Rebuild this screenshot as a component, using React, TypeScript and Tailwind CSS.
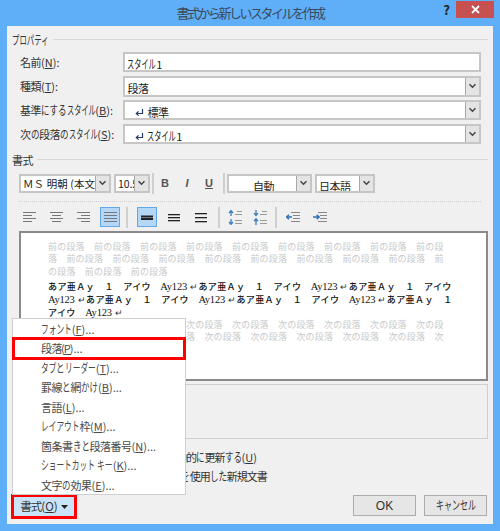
const jp = "font-['Noto_Sans_CJK_JP',sans-serif]";

// Meiryo UI has narrow kana, so each kana run is squeezed to its own advance
function Mei({ text, size = 11, kanaSize = 12.5, kanji = 10.5, hira = 8.5, kata = 7.2 }: { text: string; size?: number; kanaSize?: number; kanji?: number; hira?: number; kata?: number }) {
  const runs = text.match(/[\u3040-\u309f]+|[\u30a0-\u30ff]+|[^\u3040-\u30ff]+/g) ?? [];
  return (
    <span className="whitespace-nowrap" style={{ fontSize: size }}>
      {runs.map((r, i) => {
        const code = r.charCodeAt(0);
        const isHira = code >= 0x3040 && code <= 0x309f;
        const isKata = code >= 0x30a0 && code <= 0x30ff;
        if (isHira || isKata) {
          const adv = isHira ? hira : kata;
          return (
            <span key={i} className="inline-block origin-left" style={{ width: adv * r.length, fontSize: kanaSize, lineHeight: 1, transform: `scaleX(${adv / kanaSize})` }}>
              {r}
            </span>
          );
        }
        const isCjk = code > 0x2e80;
        return (
          <span key={i} style={{ letterSpacing: isCjk ? kanji - size : undefined }}>
            {r}
          </span>
        );
      })}
    </span>
  );
}

function Chevron() {
  return (
    <svg width="9" height="6" viewBox="0 0 9 6">
      <path d="M1.5 1.2 L4.5 4.2 L7.5 1.2" fill="none" stroke="#444" strokeWidth="1.5" />
    </svg>
  );
}

function ReturnMark() {
  return (
    <svg className="mr-[3px] inline-block" width="9" height="9" viewBox="0 0 9 9">
      <path d="M7.5 1V5.5H1.5M3.6 3.4L1.3 5.5L3.6 7.6" fill="none" stroke="#24386f" strokeWidth="1.2" />
    </svg>
  );
}

function Combo({ text, className, arrow, textClass }: { text: React.ReactNode; className: string; arrow?: boolean; textClass?: string }) {
  return (
    <div className={`flex items-stretch overflow-hidden border-2 border-[#c6c6c6] bg-white ${className}`}>
      <div className={`min-w-0 flex-1 overflow-hidden whitespace-nowrap pl-[2px] leading-[16px] text-[#222] ${textClass ?? ""}`}>{text}</div>
      {arrow !== false && (
        <div className="flex w-[14px] shrink-0 items-center justify-center border-l border-[#a8a8a8] bg-[#e4e4e4]">
          <Chevron />
        </div>
      )}
    </div>
  );
}

function FormRow({ label, accel, children }: { label: string; accel: string; children: React.ReactNode }) {
  return (
    <div className="flex h-[24px] items-center">
      <div className="w-[106px] whitespace-nowrap pl-[1px] text-[11px] text-[#333]">
        <Mei text={label} />(<span className="underline">{accel}</span>):
      </div>
      {children}
    </div>
  );
}

function Legend({ text }: { text: string }) {
  return (
    <div className="flex h-[14px] items-center gap-[4px]">
      <span className="leading-[14px] text-[#333]"><Mei text={text} kata={7.4} /></span>
      <div className="h-px flex-1 bg-[#d8d8d8]" />
    </div>
  );
}

function AlignIcon({ widths, anchor }: { widths: number[]; anchor: "l" | "c" | "r" | "j" }) {
  return (
    <svg width="13" height="11" viewBox="0 0 13 11">
      {widths.map((w, i) => {
        const x = anchor === "l" || anchor === "j" ? 0 : anchor === "c" ? (13 - w) / 2 : 13 - w;
        return <rect key={i} x={x} y={i * 3} width={w} height="1" fill="#777" />;
      })}
    </svg>
  );
}

function SpacingIcon({ lines, bar = 1.3 }: { lines: number[]; bar?: number }) {
  return (
    <svg width="12" height="15" viewBox="0 0 12 15">
      {lines.map((y) => (
        <rect key={y} x="0" y={y} width="12" height={bar} fill="#222" />
      ))}
    </svg>
  );
}

function LineHeightIcon({ inward }: { inward?: boolean }) {
  return (
    <svg width="14" height="15" viewBox="0 0 14 15">
      {inward ? (
        <path d="M3 0V5M1 3.2L3 5.6L5 3.2M3 15V9M1 11.2L3 8.8L5 11.2" fill="none" stroke="#3b7cc0" strokeWidth="1.3" />
      ) : (
        <path d="M3 6V1M1 3L3 .6L5 3M3 9V14M1 12L3 14.4L5 12" fill="none" stroke="#3b7cc0" strokeWidth="1.3" />
      )}
      <path d="M9 1.5H14M7 4.5H14M7 10.5H14M7 13.5H14" stroke="#999" strokeWidth="1.2" />
    </svg>
  );
}

function IndentIcon({ right }: { right?: boolean }) {
  return (
    <svg width="14" height="11" viewBox="0 0 14 11">
      <path d="M5 .5H14M7 3.5H14M7 6.5H14M5 9.5H14" stroke="#888" strokeWidth="1" />
      {right ? (
        <path d="M0 5H6M3.6 2.8L6.2 5L3.6 7.2" fill="none" stroke="#2f6fb5" strokeWidth="1.4" />
      ) : (
        <path d="M6 5H.6M3 2.8L.6 5L3 7.2" fill="none" stroke="#2f6fb5" strokeWidth="1.4" />
      )}
    </svg>
  );
}

function ToolCell({ active, children, className }: { active?: boolean; children: React.ReactNode; className?: string }) {
  return (
    <div className={`flex h-[20px] w-[20px] items-center justify-center ${active ? "border border-[#62a8e6] bg-[#b3d7f5]" : ""} ${className ?? ""}`}>
      {children}
    </div>
  );
}

function Sep({ className }: { className: string }) {
  return <div className={`h-[21px] w-[2px] shrink-0 bg-[#cfcfcf] ${className}`} />;
}

const prev = "前の段落　";
const next = "次の段落　";

function GrayLines({ word }: { word: string }) {
  const lines = [word.repeat(8) + word.slice(0, 3), "落　" + word.repeat(8) + word.slice(0, 1), "の段落　" + word.repeat(2)];
  return (
    <div>
      {lines.map((l, i) => (
        <div key={i} className="h-[12.7px] whitespace-pre text-[9px] leading-[12.7px] tracking-[0.2px] text-[#c8c8c8]">
          {l}
        </div>
      ))}
    </div>
  );
}

function Sample({ parts }: { parts: string[] }) {
  return (
    <div className="flex h-[13px] items-center whitespace-pre text-[9px] font-medium leading-[13px] tracking-[0.4px] text-[#111]">
      {parts.map((p, i) =>
        p === "AY" ? (
          <span key={i} className="mr-[3px] font-['Liberation_Serif',serif] text-[10.5px] tracking-[-0.2px]">Ay123</span>
        ) : p === "RET" ? (
          <span key={i} className="text-[9px] text-[#333]">↵</span>
        ) : (
          <span key={i}>{p}</span>
        )
      )}
    </div>
  );
}

function MenuItem({ label, accel, boxed }: { label: string; accel: string; boxed?: boolean }) {
  return (
    <div className={`flex h-[19.5px] items-center pl-[28px] text-[11px] text-[#4a4a4a] ${boxed ? "mx-[1px] -indent-[1px] outline-[3px] outline-[#ff0000] -outline-offset-1" : ""}`}>
      <Mei text={label} kata={7.7} />(<span className="underline">{accel}</span>)...
    </div>
  );
}

export default function App() {
  return (
    <div className={`relative h-[531px] w-[500px] overflow-hidden bg-[#5eaef8] ${jp}`}>
      <div className="relative flex h-[26px] items-center justify-center pb-[1px] text-[13px] tracking-[-2.5px] text-[#3a4a5a]">
        書式から新しいスタイルを作成
        <div className="absolute right-[6px] top-[1px] flex items-start">
          <span className="mr-[6px] mt-[1px] text-[13px] font-bold leading-[16px] tracking-normal text-[#222]">?</span>
          <div className="flex h-[17px] w-[38px] items-center justify-center bg-[#c75050]">
            <svg width="9" height="9" viewBox="0 0 9 9">
              <path d="M1 1L8 8M8 1L1 8" stroke="#fff" strokeWidth="1.8" />
            </svg>
          </div>
        </div>
      </div>

      <div className="relative mx-[7px] h-[498px] w-[486px] bg-[#f0f0f0] px-[12px] pt-[6px]">
        <div className="-ml-[7px] mr-[-7px] mb-[4px]"><Legend text="プロパティ" /></div>

        <FormRow label="名前" accel="N">
          <Combo className="h-[20px] w-[363px]" arrow={false} text={<Mei text="スタイル1" />} />
        </FormRow>
        <FormRow label="種類" accel="T">
          <Combo className="h-[21px] w-[363px]" text={<Mei text="段落" />} />
        </FormRow>
        <FormRow label="基準にするスタイル" accel="B">
          <Combo className="h-[20px] w-[363px]" text={<span className="pl-[8px]"><ReturnMark /><Mei text="標準" /></span>} />
        </FormRow>
        <FormRow label="次の段落のスタイル" accel="S">
          <Combo className="h-[20px] w-[363px]" text={<span className="pl-[8px]"><ReturnMark /><Mei text="スタイル1" /></span>} />
        </FormRow>

        <div className="-ml-[7px] mr-[-7px] mb-[7px] mt-[6px]"><Legend text="書式" /></div>

        <div className="flex h-[20px] items-center">
          <Combo className="h-[19px] w-[92px] text-[10.5px] tracking-[0.1px]" text="ＭＳ 明朝 (本文の" />
          <Combo className="ml-[3px] h-[19px] w-[36px] text-[10.5px] tracking-[-0.1px]" text="10.5" />
          <Sep className="ml-[2px]" />
          <div className="flex">
            <ToolCell className="w-[22px] font-['Liberation_Sans',sans-serif] text-[11px] font-bold text-[#555]">B</ToolCell>
            <ToolCell className="w-[22px] font-['Liberation_Sans',sans-serif] text-[11px] font-bold italic text-[#555]">I</ToolCell>
            <ToolCell className="w-[22px] font-['Liberation_Sans',sans-serif] text-[11px] font-bold text-[#555] underline">U</ToolCell>
          </div>
          <Sep className="ml-[3px]" />
          <Combo className="ml-[2px] h-[19px] w-[85px]" textClass="text-center" text={<Mei text="自動" />} />
          <Combo className="ml-[3px] h-[19px] w-[60px]" text={<Mei text="日本語" />} />
        </div>

        <div className="mb-[5px] mt-[8px] border-t border-dotted border-[#cfcfcf]" />

        <div className="flex h-[20px] items-center">
          <ToolCell className="w-[20px]"><AlignIcon anchor="l" widths={[13, 9, 13, 9]} /></ToolCell>
          <ToolCell className="ml-[7px]"><AlignIcon anchor="c" widths={[13, 9, 13, 9]} /></ToolCell>
          <ToolCell className="ml-[7px]"><AlignIcon anchor="r" widths={[13, 9, 13, 9]} /></ToolCell>
          <ToolCell active className="ml-[7px]"><AlignIcon anchor="j" widths={[13, 13, 13, 13]} /></ToolCell>
          <Sep className="ml-[6px]" />
          <ToolCell active className="ml-[9px]"><SpacingIcon lines={[5.5, 8]} bar={2} /></ToolCell>
          <ToolCell className="ml-[7px]"><SpacingIcon lines={[4, 7, 10]} /></ToolCell>
          <ToolCell className="ml-[7px]"><SpacingIcon lines={[3, 7, 11]} /></ToolCell>
          <Sep className="ml-[7px]" />
          <ToolCell className="ml-[5px]"><LineHeightIcon /></ToolCell>
          <ToolCell className="ml-[5px]"><LineHeightIcon inward /></ToolCell>
          <Sep className="ml-[5px]" />
          <ToolCell className="ml-[6px]"><IndentIcon /></ToolCell>
          <ToolCell className="ml-[7px]"><IndentIcon right /></ToolCell>
        </div>

        <div className="mt-[4px] h-[150px] w-[469px] border-2 border-[#8a8a8a] bg-white pl-[27px] pt-[7.6px]">
          <GrayLines word={prev} />
          <div className="mt-[1px]">
            <Sample parts={["あア亜Ａｙ　１　アイウ　", "AY", "RET", "あア亜Ａｙ　１　アイウ　", "AY", "RET", "あア亜Ａｙ　１　アイウ"]} />
            <Sample parts={["AY", "RET", "あア亜Ａｙ　１　アイウ　", "AY", "RET", "あア亜Ａｙ　１　アイウ　", "AY", "RET", "あア亜Ａｙ　１"]} />
            <Sample parts={["アイウ　", "AY", "RET"]} />
          </div>
          <GrayLines word={next} />
        </div>

        <div className="mt-[3px] h-[55px] w-[469px] border border-[#cfcfcf]" />

        <div className="mt-[8.5px] flex h-[19px] items-center whitespace-nowrap text-[#333]">
          <span className="w-[147px] shrink-0" />
          <Mei text="自動的に更新する" kanji={10} hira={8.5} />
          <span className="text-[11px]">(<span className="underline">U</span>)</span>
        </div>
        <div className="flex h-[19px] items-center whitespace-nowrap text-[#333]">
          <span className="w-[102px] shrink-0" />
          <Mei text="このテンプレートを使用した新規文書" kanji={10} hira={8.5} />
        </div>

        <div className="-mr-[6px] mt-[9.5px] flex items-start justify-between">
          <div className="-ml-[5px] mt-[2px] flex h-[19px] w-[60px] items-center justify-center bg-[#c9e3f8] text-[11.5px] text-[#333] outline-[3px] outline-[#ff0000]">
            <Mei text="書式" size={11.5} />(<span className="underline">O</span>)
            <svg className="ml-[3px]" width="7" height="4" viewBox="0 0 7 4"><path d="M0 0H7L3.5 4Z" fill="#222" /></svg>
          </div>
          <div className="flex gap-[8px]">
            <div className="flex h-[21px] w-[63px] items-center justify-center border border-[#acacac] bg-[#e6e6e6] font-['Liberation_Sans',sans-serif] text-[12px] text-[#333]">OK</div>
            <div className="flex h-[21px] w-[63px] items-center justify-center border border-[#acacac] bg-[#e6e6e6] text-[#333]"><Mei text="キャンセル" kata={8} /></div>
          </div>
        </div>

        <div className="absolute left-[5px] top-[292px] h-[177px] w-[174px] border border-[#cfcfcf] bg-white">
          <MenuItem label="フォント" accel="F" />
          <MenuItem label="段落" accel="P" boxed />
          <MenuItem label="タブとリーダー" accel="T" />
          <MenuItem label="罫線と網かけ" accel="B" />
          <MenuItem label="言語" accel="L" />
          <MenuItem label="レイアウト枠" accel="M" />
          <MenuItem label="箇条書きと段落番号" accel="N" />
          <MenuItem label="ショートカット キー" accel="K" />
          <MenuItem label="文字の効果" accel="E" />
        </div>
      </div>
    </div>
  );
}
